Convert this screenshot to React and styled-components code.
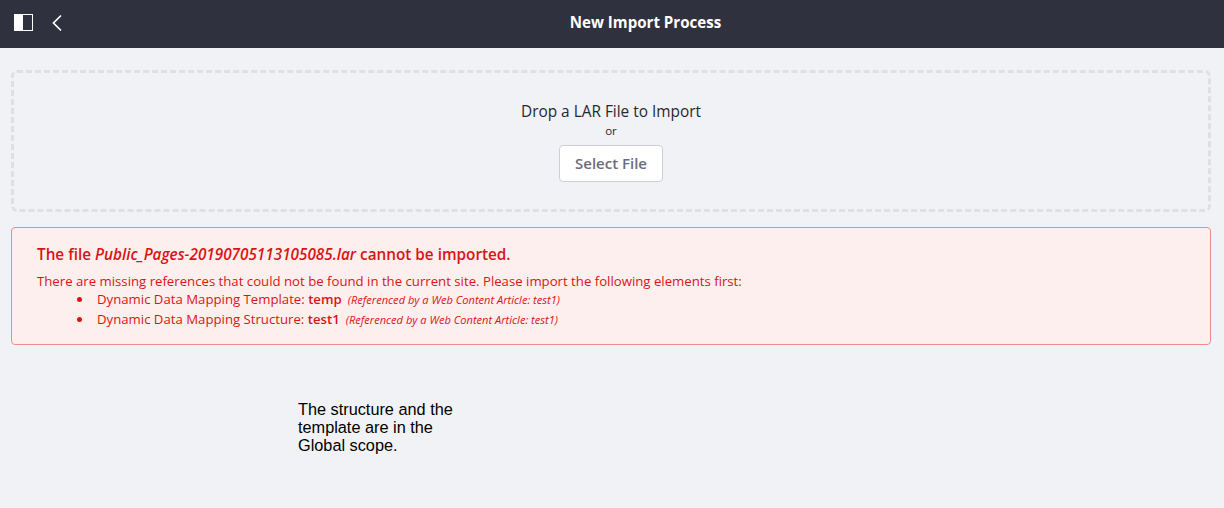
import React from "react";
import styled, { createGlobalStyle } from "styled-components";

const GlobalStyle = createGlobalStyle`
  html, body {
    margin: 0;
    padding: 0;
    background-color: #f1f2f5;
    font-family: "Open Sans", "Noto Sans", sans-serif;
  }
`;

const PanelIcon = () => (
  <svg width="20" height="18" viewBox="0 0 20 18" style={{ display: "block" }}>
    <rect x="0.5" y="0.5" width="18" height="16" fill="none" stroke="#fff" />
    <rect x="0" y="0" width="9" height="17" fill="#fff" />
  </svg>
);

const BackIcon = () => (
  <svg width="12" height="18" viewBox="0 0 12 18" style={{ display: "block" }}>
    <path d="M10 1.5 L2.5 9 L10 16.5" fill="none" stroke="#fff" strokeWidth="1.7" />
  </svg>
);

const App = () => {
  return (
    <Page>
      <GlobalStyle />
      <Header>
        <HeaderIcons>
          <PanelIcon />
          <BackIcon />
        </HeaderIcons>
        <Title>New Import Process</Title>
      </Header>
      <Content>
        <DropZone>
          <DropTitle>Drop a LAR File to Import</DropTitle>
          <Or>or</Or>
          <SelectButton type="button">Select File</SelectButton>
        </DropZone>
        <Alert>
          <AlertTitle>
            The file <em>Public_Pages-20190705113105085.lar</em> cannot be imported.
          </AlertTitle>
          <AlertText>
            There are missing references that could not be found in the current site. Please import the following elements first:
          </AlertText>
          <MissingList>
            <li>
              Dynamic Data Mapping Template: <strong>temp</strong>
              <Reference>(Referenced by a Web Content Article: test1)</Reference>
            </li>
            <li>
              Dynamic Data Mapping Structure: <strong>test1</strong>
              <Reference>(Referenced by a Web Content Article: test1)</Reference>
            </li>
          </MissingList>
        </Alert>
        <Note>The structure and the template are in the Global scope.</Note>
      </Content>
    </Page>
  );
};

const Page = styled.div`
  min-height: 508px;
  background-color: #f1f2f5;
`;

const Header = styled.header`
  position: relative;
  height: 48px;
  display: flex;
  align-items: center;
  justify-content: center;
  background-color: #30313f;
`;

const HeaderIcons = styled.div`
  position: absolute;
  left: 14px;
  top: 14px;
  display: flex;
  align-items: center;
  gap: 17px;
`;

const Title = styled.h1`
  margin: 0 0 0 67px;
  color: #fff;
  font-size: 15.1px;
  font-weight: 700;
  line-height: 48px;
  transform: translateY(-2px);
`;

const Content = styled.main`
  padding: 22px 13px 0 11px;
`;

const DropZone = styled.section`
  box-sizing: border-box;
  height: 142px;
  display: flex;
  flex-direction: column;
  align-items: center;
  padding-top: 29px;
  border: 3px dashed #e0e0e0;
  border-radius: 6px;
`;

const DropTitle = styled.div`
  color: #272833;
  font-size: 15.4px;
  line-height: 20px;
`;

const Or = styled.div`
  color: #272833;
  font-size: 11.5px;
  line-height: 17px;
`;

const SelectButton = styled.button`
  box-sizing: border-box;
  width: 104px;
  height: 37px;
  margin-top: 6px;
  padding: 0 0 2px;
  background-color: #fff;
  border: 1px solid #cdced9;
  border-radius: 4px;
  color: #6b6c7e;
  font-family: inherit;
  font-size: 15px;
  font-weight: 600;
`;

const Alert = styled.section`
  box-sizing: border-box;
  height: 118px;
  margin-top: 15px;
  padding: 16px 25px 0;
  background-color: #feefef;
  border: 1px solid #f48989;
  border-radius: 4px;
  color: #da1414;
`;

const AlertTitle = styled.h4`
  margin: 0;
  font-size: 15.3px;
  font-weight: 600;
  line-height: 21px;
`;

const AlertText = styled.p`
  margin: 7px 0 0;
  font-size: 13.2px;
  line-height: 18px;
`;

const MissingList = styled.ul`
  margin: 0;
  padding: 0 0 0 60px;
  list-style: none;
  font-size: 13.2px;
  line-height: 19.5px;

  li {
    position: relative;
  }

  li::before {
    content: "";
    position: absolute;
    left: -20px;
    top: 7px;
    width: 5px;
    height: 5px;
    border-radius: 50%;
    background-color: #da1414;
  }

  strong {
    font-weight: 600;
  }
`;

const Reference = styled.em`
  margin-left: 6px;
  font-size: 11.1px;
`;

const Note = styled.p`
  width: 170px;
  margin: 55px 0 0 287px;
  color: #000;
  font-family: "Liberation Sans", Arial, sans-serif;
  font-size: 16.3px;
  line-height: 18px;
`;

export default App;
